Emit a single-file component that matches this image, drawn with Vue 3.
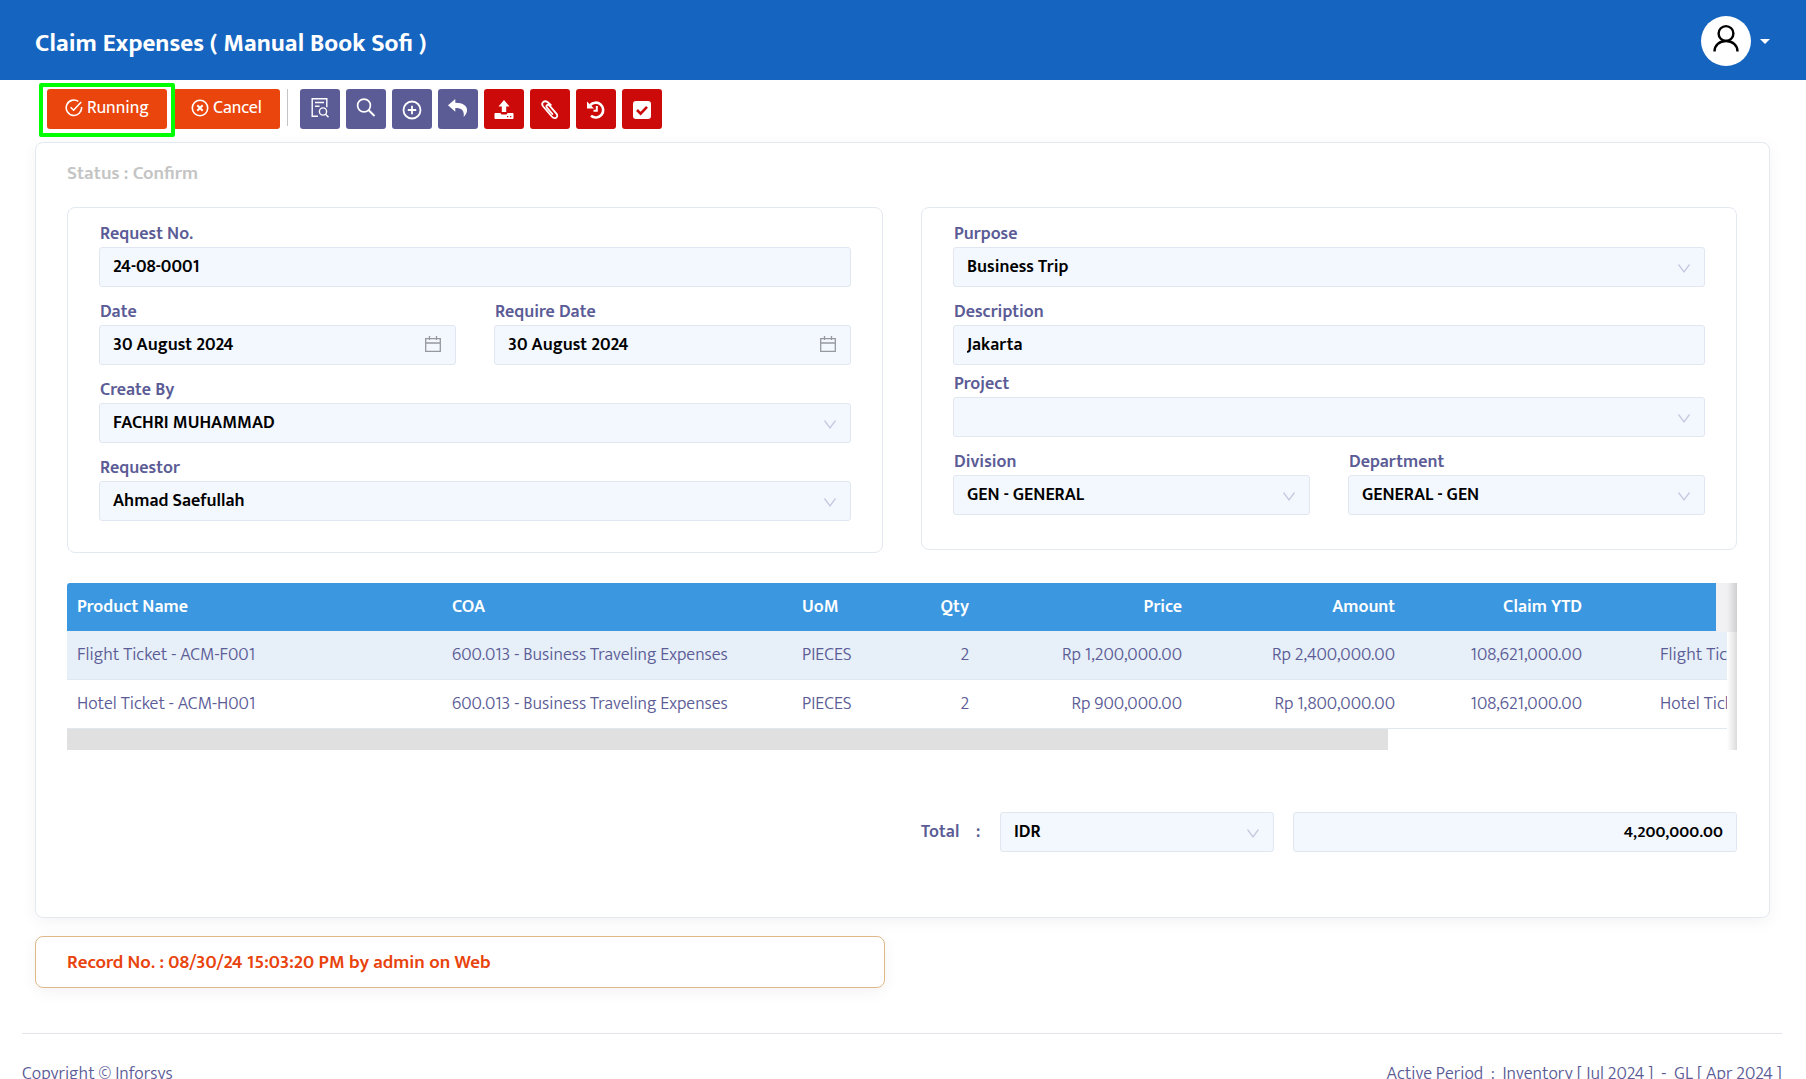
<script setup>
import { ref } from 'vue'

const requestNo = ref('24-08-0001')
const date = ref('30 August 2024')
const requireDate = ref('30 August 2024')
const description = ref('Jakarta')
const total = ref('4,200,000.00')

const rows = [
  { product: 'Flight Ticket - ACM-F001', coa: '600.013 - Business Traveling Expenses', uom: 'PIECES', qty: 2, price: 'Rp 1,200,000.00', amount: 'Rp 2,400,000.00', claim: '108,621,000.00', remark: 'Flight Ticket' },
  { product: 'Hotel Ticket - ACM-H001', coa: '600.013 - Business Traveling Expenses', uom: 'PIECES', qty: 2, price: 'Rp 900,000.00', amount: 'Rp 1,800,000.00', claim: '108,621,000.00', remark: 'Hotel Ticket' },
]
</script>

<template>
  <div class="page">
    <header class="topbar">
      <h1>Claim Expenses ( Manual Book Sofi )</h1>
      <button class="account" type="button" aria-label="Account">
        <span class="avatar">
          <svg width="28" height="30" viewBox="0 0 28 30" fill="none" stroke="#000" stroke-width="2.4">
            <circle cx="14" cy="9.5" r="7.4" />
            <path d="M2.500 27.500C2.500 21.300 7.500 17 14 17S25.500 21.300 25.500 27.500" />
          </svg>
        </span>
        <svg width="10" height="5" viewBox="0 0 10 5"><path d="M0 0h10L5 5z" fill="#fff" /></svg>
      </button>
    </header>

    <main>
      <div class="toolbar">
        <div class="highlighted">
          <button class="action" type="button">
            <svg width="18" height="18" viewBox="0 0 18 18" fill="none" stroke="currentColor" stroke-width="1.600">
              <path d="M13.300 2.400A7.700 7.700 0 1 0 16.600 8" /><path d="M5.600 8.200l3 3 7.600-8.200" />
            </svg>
            Running
          </button>
        </div>
        <button class="action" type="button">
          <svg width="18" height="18" viewBox="0 0 18 18" fill="none" stroke="currentColor" stroke-width="1.600">
            <circle cx="9" cy="9" r="7.700" /><path d="M6.300 6.300l5.400 5.400M11.700 6.300l-5.400 5.400" stroke-width="2" />
          </svg>
          Cancel
        </button>
        <span class="divider"></span>
        <div class="tools">
          <button class="tool" type="button" aria-label="Preview">
            <svg width="20" height="22" viewBox="0 0 20 22" fill="none" stroke="currentColor" stroke-width="1.400">
              <path d="M8 19.300H2.200V1.700h14.600v8.500M5 5.500h9M5 9.300h4.500" /><circle cx="13" cy="14.500" r="3.600" /><path d="M15.500 17.200l3 3" />
            </svg>
          </button>
          <button class="tool" type="button" aria-label="Search">
            <svg width="20" height="22" viewBox="0 0 20 22" fill="none" stroke="currentColor" stroke-width="1.700">
              <circle cx="8" cy="8.500" r="6.400" /><path d="M12.500 13l6 6" stroke-width="2" />
            </svg>
          </button>
          <button class="tool low" type="button" aria-label="Add">
            <svg width="20" height="20" viewBox="0 0 20 20" fill="none" stroke="currentColor" stroke-width="1.800">
              <circle cx="10" cy="10" r="8.500" /><path d="M10 5.800v8.400M5.800 10h8.400" />
            </svg>
          </button>
          <button class="tool" type="button" aria-label="Back">
            <svg width="22" height="20" viewBox="0 0 22 20" fill="currentColor">
              <path d="M8.300 1L1 7.300l7.300 6.500V10c5.500 0 9.300 1.500 8.400 9C22.800 12.500 21 5 8.300 4.800z" />
            </svg>
          </button>
          <button class="tool red" type="button" aria-label="Upload">
            <svg width="20" height="20" viewBox="0 0 20 20" fill="currentColor">
              <path d="M10 0l5.500 6.500h-3.300V12H7.800V6.500H4.500z" />
              <path fill-rule="evenodd" d="M1.500 13H6.500c.3 1 1 1.500 2 1.500h3c1 0 1.700-.5 2-1.500h5c.8 0 1 .4 1 1v4c0 .7-.4 1-1 1h-17c-.7 0-1-.4-1-1v-4c0-.6.300-1 1-1zM13 16v1.300h1.300V16zM16 16v1.300h1.300V16z" />
            </svg>
          </button>
          <button class="tool red" type="button" aria-label="Attach">
            <svg width="18" height="20" viewBox="0 0 18 20" fill="none" stroke="currentColor" stroke-width="1.800" stroke-linecap="round">
              <path d="M9.800 5L6.800 2.300C3.200-.4-.5 3 2.200 6.500l8.600 10c3 3.500 7 .4 4.800-2.600L8.500 5.700c-1.800-2-4.200 0-2.600 1.900l5.500 6.400" />
            </svg>
          </button>
          <button class="tool red" type="button" aria-label="History">
            <svg width="20" height="20" viewBox="0 0 20 20" fill="none" stroke="currentColor" stroke-width="2.600">
              <path d="M4.200 5.200A7.400 7.400 0 1 1 5 15.700" /><path d="M1 1.500V8.500h7z" fill="currentColor" stroke="none" /><path d="M10.800 6v4.700H7.500" stroke-width="2" />
            </svg>
          </button>
          <button class="tool red" type="button" aria-label="Approve">
            <svg width="18" height="18" viewBox="0 0 18 18"><rect width="18" height="18" rx="3" fill="#fff" /><path d="M4 9l3.600 3.600L14 5.800" fill="none" stroke="#cc0a0a" stroke-width="2.600" /></svg>
          </button>
        </div>
      </div>

      <section class="card">
        <p class="status">Status : Confirm</p>

        <div class="panels">
          <div class="panel">
            <div class="field">
              <label for="request-no">Request No.</label>
              <input id="request-no" v-model="requestNo" class="control" type="text" />
            </div>
            <div class="pair">
              <div class="field">
                <label for="date">Date</label>
                <div class="box">
                  <input id="date" v-model="date" class="control" type="text" />
                  <svg class="calendar" width="16" height="16" viewBox="0 0 16 16"><path d="M.7 2.700h14.600v12.600H.7zM.7 7h14.600M4.500 0v4M11.500 0v4" /></svg>
                </div>
              </div>
              <div class="field">
                <label for="require-date">Require Date</label>
                <div class="box">
                  <input id="require-date" v-model="requireDate" class="control" type="text" />
                  <svg class="calendar" width="16" height="16" viewBox="0 0 16 16"><path d="M.7 2.700h14.600v12.600H.7zM.7 7h14.600M4.500 0v4M11.500 0v4" /></svg>
                </div>
              </div>
            </div>
            <div class="field">
              <label for="create-by">Create By</label>
              <div class="box">
                <select id="create-by" class="control"><option>FACHRI MUHAMMAD</option></select>
                <svg class="chevron" width="12" height="9" viewBox="0 0 12 9"><path d="M.5.5L6 7.800 11.500.5" /></svg>
              </div>
            </div>
            <div class="field">
              <label for="requestor">Requestor</label>
              <div class="box">
                <select id="requestor" class="control"><option>Ahmad Saefullah</option></select>
                <svg class="chevron" width="12" height="9" viewBox="0 0 12 9"><path d="M.5.5L6 7.800 11.500.5" /></svg>
              </div>
            </div>
          </div>

          <div class="panel">
            <div class="field">
              <label for="purpose">Purpose</label>
              <div class="box">
                <select id="purpose" class="control"><option>Business Trip</option></select>
                <svg class="chevron" width="12" height="9" viewBox="0 0 12 9"><path d="M.5.5L6 7.800 11.500.5" /></svg>
              </div>
            </div>
            <div class="field tight">
              <label for="description">Description</label>
              <input id="description" v-model="description" class="control" type="text" />
            </div>
            <div class="field">
              <label for="project">Project</label>
              <div class="box">
                <select id="project" class="control"><option></option></select>
                <svg class="chevron" width="12" height="9" viewBox="0 0 12 9"><path d="M.5.5L6 7.800 11.500.5" /></svg>
              </div>
            </div>
            <div class="pair">
              <div class="field">
                <label for="division">Division</label>
                <div class="box">
                  <select id="division" class="control"><option>GEN - GENERAL</option></select>
                  <svg class="chevron" width="12" height="9" viewBox="0 0 12 9"><path d="M.5.5L6 7.800 11.500.5" /></svg>
                </div>
              </div>
              <div class="field">
                <label for="department">Department</label>
                <div class="box">
                  <select id="department" class="control"><option>GENERAL - GEN</option></select>
                  <svg class="chevron" width="12" height="9" viewBox="0 0 12 9"><path d="M.5.5L6 7.800 11.500.5" /></svg>
                </div>
              </div>
            </div>
          </div>
        </div>

        <div class="grid">
          <div class="viewport">
            <table>
              <colgroup>
                <col class="c-product" /><col class="c-coa" /><col class="c-uom" /><col class="c-qty" />
                <col class="c-money" /><col class="c-money" /><col class="c-claim" /><col class="c-remark" />
              </colgroup>
              <thead>
                <tr>
                  <th>Product Name</th><th>COA</th><th>UoM</th><th class="num">Qty</th>
                  <th class="num">Price</th><th class="num">Amount</th><th class="num">Claim YTD</th><th></th>
                </tr>
              </thead>
              <tbody>
                <tr v-for="row in rows" :key="row.product">
                  <td>{{ row.product }}</td>
                  <td>{{ row.coa }}</td>
                  <td>{{ row.uom }}</td>
                  <td class="num">{{ row.qty }}</td>
                  <td class="num">{{ row.price }}</td>
                  <td class="num">{{ row.amount }}</td>
                  <td class="num">{{ row.claim }}</td>
                  <td class="remark">{{ row.remark }}</td>
                </tr>
              </tbody>
            </table>
          </div>
          <div class="scroll"><div class="thumb"></div></div>
          <div class="corner"></div>
          <div class="edge"></div>
        </div>

        <div class="total">
          <label for="total">Total</label>
          <span class="colon">:</span>
          <div class="box currency">
            <select class="control" aria-label="Currency"><option>IDR</option></select>
            <svg class="chevron" width="12" height="9" viewBox="0 0 12 9"><path d="M.5.5L6 7.800 11.500.5" /></svg>
          </div>
          <input id="total" v-model="total" class="control sum" type="text" />
        </div>
      </section>

      <section class="record">Record No. : 08/30/24 15:03:20 PM by admin on Web</section>
    </main>

    <footer>
      <span>Copyright © Inforsys</span>
      <span>Active Period&nbsp; :&nbsp; Inventory [ Jul 2024 ]&nbsp; -&nbsp; GL [ Apr 2024 ]</span>
    </footer>
  </div>
</template>

<style>
body {
  margin: 0;
  background: #fff;
}
</style>

<style scoped>
.page {
  font-family: "Mukta", Lato, "Open Sans", sans-serif;
  font-size: 18px;
  line-height: 24px;
  color: #5b5c96;
}
.page * {
  box-sizing: border-box;
}
button,
input,
select {
  font: inherit;
  margin: 0;
}
svg {
  display: block;
  flex: none;
}
.topbar {
  display: flex;
  align-items: center;
  justify-content: space-between;
  height: 80px;
  padding: 0 36px 0 35px;
  background: #1565c0;
}
h1 {
  margin: 8px 0 0;
  font-size: 25px;
  line-height: 32px;
  font-weight: 700;
  color: #fff;
}
.account {
  display: flex;
  align-items: center;
  gap: 9px;
  padding: 2px 0 0;
  border: 0;
  background: none;
}
.avatar {
  display: flex;
  justify-content: center;
  width: 50px;
  height: 50px;
  padding-top: 8px;
  border-radius: 50%;
  background: #fff;
}
main {
  padding: 9px 36px 0 35px;
}
.toolbar {
  display: flex;
  align-items: flex-start;
  height: 40px;
  padding-left: 12px;
}
.highlighted {
  position: relative;
  z-index: 1;
  margin-right: 6px;
}
.highlighted::after {
  content: "";
  position: absolute;
  inset: -6px -8px -8px -8px;
  border: 4px solid #0f0;
  border-radius: 2px;
  pointer-events: none;
}
.action {
  display: flex;
  align-items: center;
  gap: 4px;
  height: 40px;
  padding: 0 18px 2px;
  border: 0;
  border-radius: 3px;
  background: #ea450c;
  color: #fff;
  white-space: nowrap;
}
.divider {
  width: 1px;
  height: 37px;
  margin: 0 12px 0 7px;
  background: #c4c4c8;
}
.tools {
  display: flex;
  gap: 6px;
}
.tool {
  display: flex;
  align-items: center;
  justify-content: center;
  width: 40px;
  height: 40px;
  padding: 0 0 3px;
  border: 0;
  border-radius: 3px;
  background: #5b5c96;
  color: #fff;
}
.tool.low,
.tool.red {
  padding: 1px 0 0;
}
.tool.red {
  background: #cc0a0a;
}
.card {
  margin-top: 13px;
  padding: 19px 32px 65px 31px;
  border: 1px solid #e4e8f1;
  border-radius: 8px;
  box-shadow: 0 4px 16px rgba(0, 0, 0, 0.05);
}
.status {
  margin: 0;
  color: #c4c4c4;
  font-size: 19px;
  font-weight: 600;
}
.panels {
  display: grid;
  grid-template-columns: 1fr 1fr;
  gap: 38px;
  align-items: start;
  margin-top: 21px;
}
.panel {
  padding: 14px 31px 18px;
  border: 1px solid #e4e8f1;
  border-radius: 8px;
}
.panel + .panel {
  padding-bottom: 21px;
}
.pair {
  display: grid;
  grid-template-columns: 1fr 1fr;
  gap: 38px;
}
.field {
  display: flex;
  flex-direction: column;
  gap: 1px;
  padding-bottom: 13px;
}
.field.tight {
  padding-bottom: 7px;
}
label {
  padding-left: 1px;
  font-weight: 600;
}
.box {
  position: relative;
}
.control {
  display: block;
  width: 100%;
  height: 40px;
  padding: 0 13px;
  border: 1px solid #e1e7f0;
  border-radius: 3px;
  background: #f3f8ff;
  color: #000;
  font-weight: 600;
  appearance: none;
  outline: 0;
}
.chevron {
  position: absolute;
  top: 17px;
  right: 15px;
  fill: none;
  stroke: #c5c8de;
  stroke-width: 1.3px;
  pointer-events: none;
}
.calendar {
  position: absolute;
  top: 11px;
  right: 15px;
  fill: none;
  stroke: #96989f;
  stroke-width: 1.3px;
  pointer-events: none;
}
.grid {
  position: relative;
  margin-top: 30px;
}
.viewport {
  margin-right: 10px;
  overflow: hidden;
  border-radius: 3px 0 0 0;
}
table {
  width: 2107px;
  table-layout: fixed;
  border-collapse: separate;
  border-spacing: 0;
}
.c-product { width: 375px; }
.c-coa { width: 350px; }
.c-uom { width: 87px; }
.c-qty { width: 100px; }
.c-money { width: 213px; }
.c-claim { width: 187px; }
th,
td {
  height: 49px;
  padding: 0 10px;
  text-align: left;
  white-space: nowrap;
}
th {
  height: 48px;
  background: #3b97e0;
  color: #fff;
  font-weight: 600;
}
td {
  border-bottom: 1px solid #e1e7ee;
  font-weight: 300;
}
tbody tr:nth-child(odd) td {
  background: #e7eff8;
}
.num {
  text-align: right;
}
td.remark {
  padding-left: 68px;
}
.scroll {
  height: 21px;
}
.thumb {
  width: 79.1%;
  height: 100%;
  background: #e0e0e0;
}
.corner {
  position: absolute;
  top: 0;
  right: 0;
  width: 21px;
  height: 49px;
  background: #f1f1f3;
}
.edge {
  position: absolute;
  top: 0;
  right: 0;
  bottom: 0;
  width: 10px;
  background: linear-gradient(to right, transparent, rgba(0, 0, 0, 0.14));
}
.total {
  display: grid;
  grid-template-columns: 55px 24px minmax(0, 293fr) minmax(0, 444fr);
  align-items: center;
  width: 50%;
  margin: 62px 0 0 auto;
  padding-left: 19px;
}
.total label {
  padding-left: 0;
}
.colon {
  font-weight: 600;
}
.currency {
  margin-right: 19px;
}
.sum {
  font-size: 17px;
  text-align: right;
}
.record {
  width: 49%;
  margin-top: 18px;
  padding: 14px 31px 12px;
  border: 1px solid #deb887;
  border-radius: 8px;
  box-shadow: 0 4px 16px rgba(0, 0, 0, 0.05);
  color: #e8430c;
  font-size: 19px;
  font-weight: 600;
}
footer {
  display: flex;
  justify-content: space-between;
  margin: 45px 24px 0 22px;
  padding: 28px 0 16px;
  border-top: 1px solid #e4e5ec;
  font-weight: 300;
}
</style>
